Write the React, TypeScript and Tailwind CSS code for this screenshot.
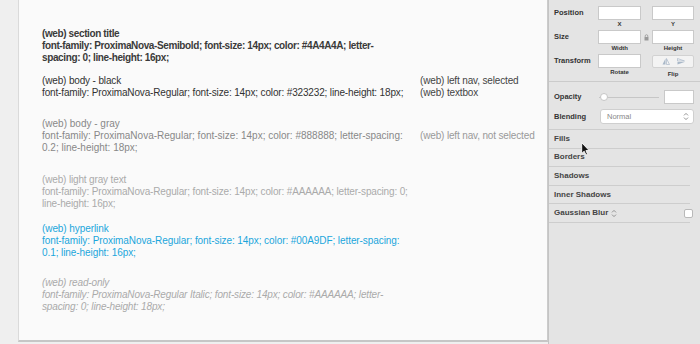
import React from "react";

type Block = {
  lines: string[];
  color: string;
  extra?: string;
  gap: string;
  side?: React.ReactNode;
};

const blocks: Block[] = [
  {
    lines: [
      "(web) section title",
      "font-family: ProximaNova-Semibold; font-size: 14px; color: #4A4A4A; letter-",
      "spacing: 0; line-height: 16px;",
    ],
    color: "text-[#3a3a3a]",
    extra: "font-semibold tracking-[-0.38px]",
    gap: "mt-0",
  },
  {
    lines: [
      "(web) body - black",
      "font-family: ProximaNova-Regular; font-size: 14px; color: #323232; line-height: 18px;",
    ],
    color: "text-[#323232]",
    gap: "mt-[11px]",
    side: (
      <div className="text-[#444]">
        <div>(web) left nav, selected</div>
        <div>(web) textbox</div>
      </div>
    ),
  },
  {
    lines: [
      "(web) body - gray",
      "font-family: ProximaNova-Regular; font-size: 14px; color: #888888; letter-spacing:",
      "0.2; line-height: 18px;",
    ],
    color: "text-[#888]",
    extra: "tracking-[0px]",
    gap: "mt-[19px]",
    side: <div className="mt-[12px] text-[#999] tracking-[-0.15px]">(web) left nav, not selected</div>,
  },
  {
    lines: [
      "(web) light gray text",
      "font-family: ProximaNova-Regular; font-size: 14px; color: #AAAAAA; letter-spacing: 0;",
      "line-height: 16px;",
    ],
    color: "text-[#aaa]",
    gap: "mt-[20px]",
  },
  {
    lines: [
      "(web) hyperlink",
      "font-family: ProximaNova-Regular; font-size: 14px; color: #00A9DF; letter-spacing:",
      "0.1; line-height: 16px;",
    ],
    color: "text-[#1aa6dc]",
    extra: "tracking-[-0.08px]",
    gap: "mt-[13px]",
  },
  {
    lines: [
      "(web) read-only",
      "font-family: ProximaNova-Regular Italic; font-size: 14px; color: #AAAAAA; letter-",
      "spacing: 0; line-height: 18px;",
    ],
    color: "text-[#aaa]",
    extra: "italic",
    gap: "mt-[18px]",
  },
];

const Updown = () => (
  <svg width="6" height="9" viewBox="0 0 6 9" fill="none" stroke="#888" strokeWidth="0.9">
    <path d="M1 3.4 L3 1.4 L5 3.4" />
    <path d="M1 5.6 L3 7.6 L5 5.6" />
  </svg>
);

const Input = ({ w }: { w: string }) => (
  <div className={`${w} h-[14px] bg-white border border-[#c9c9c9]`} />
);

const Section = ({ label }: { label: string }) => (
  <div className="h-[18.6px] mr-[10px] flex items-center border-b border-[#cdcdcd] pl-[5px] text-[8px] font-bold text-[#444]">
    <span>{label}</span>
  </div>
);

const App: React.FC = () => {
  return (
    <div className="w-[700px] h-[344px] flex overflow-hidden font-['Liberation_Sans',Arial,sans-serif]">
      {/* canvas */}
      <div className="w-[548px] h-full bg-[#efefef] pl-[18px]">
        <div className="w-[530px] h-[342px] bg-[#fafafa] border-l border-r border-b-2 border-l-[#dadada] border-r-[#cbcbcb] border-b-[#c6c6c6] pt-[28px] pl-[23px] text-[10px] leading-[12px] tracking-[-0.15px]">
          {blocks.map((b, i) => (
            <div key={i} className={`flex ${b.gap}`}>
              <div className={`w-[378px] shrink-0 ${b.color} ${b.extra ?? ""}`}>
                {b.lines.map((l, j) => (
                  <div key={j} className="whitespace-nowrap">{l}</div>
                ))}
              </div>
              {b.side && <div className="whitespace-nowrap">{b.side}</div>}
            </div>
          ))}
        </div>
      </div>

      {/* inspector */}
      <div className="relative w-[152px] h-full bg-[#e4e4e4] border-l border-[#c4c4c4] text-[#333]">
        <div className="pl-[5px] pr-[6px] pt-[6px]">
          <div className="flex items-start">
            <div className="w-[45px] text-[7.5px] font-bold leading-[14px]">Position</div>
            <div className="flex flex-col items-center">
              <Input w="w-[43px]" />
              <span className="text-[6px] font-bold leading-[9px]">X</span>
            </div>
            <div className="ml-[11px] flex flex-col items-center">
              <Input w="w-[42px]" />
              <span className="text-[6px] font-bold leading-[9px]">Y</span>
            </div>
          </div>
          <div className="flex items-start mt-[1px]">
            <div className="w-[45px] text-[7.5px] font-bold leading-[14px]">Size</div>
            <div className="flex flex-col items-center">
              <Input w="w-[43px]" />
              <span className="text-[6px] font-bold leading-[9px]">Width</span>
            </div>
            <div className="w-[11px] h-[14px] flex items-center justify-center">
              <svg width="5" height="7" viewBox="0 0 5 7">
                <path d="M1.2 3 V2 a1.3 1.3 0 0 1 2.6 0 V3" fill="none" stroke="#999" strokeWidth="0.8" />
                <rect x="0.5" y="3" width="4" height="3.5" fill="#999" />
              </svg>
            </div>
            <div className="flex flex-col items-center">
              <Input w="w-[42px]" />
              <span className="text-[6px] font-bold leading-[9px]">Height</span>
            </div>
          </div>
          <div className="flex items-start mt-[1px]">
            <div className="w-[45px] text-[7.5px] font-bold leading-[14px]">Transform</div>
            <div className="flex flex-col items-center">
              <Input w="w-[43px]" />
              <span className="text-[6px] font-bold leading-[9px]">Rotate</span>
            </div>
            <div className="ml-[11px] flex flex-col items-center">
              <div className="w-[42px] h-[13px] mt-[1px] rounded-[2px] bg-[#f3f3f3] border border-[#d2d2d2] flex items-center justify-around px-[5px]">
                <svg width="8" height="7" viewBox="0 0 8 7">
                  <path d="M3.5 0.5 L3.5 6.5 L0.5 6.5 Z" fill="#a9b8c8" />
                  <path d="M4.5 0.5 L4.5 6.5 L7.5 6.5 Z" fill="none" stroke="#a9b8c8" strokeWidth="0.7" />
                </svg>
                <svg width="8" height="7" viewBox="0 0 8 7">
                  <path d="M0.5 0.5 L7.5 3 L0.5 3 Z" fill="none" stroke="#a9b8c8" strokeWidth="0.7" />
                  <path d="M0.5 4 L7.5 4 L0.5 6.5 Z" fill="#a9b8c8" />
                </svg>
              </div>
              <span className="text-[6px] font-bold leading-[10px] mt-[1px]">Flip</span>
            </div>
          </div>
        </div>

        <div className="mt-[2px] border-t border-[#cbcbcb]" />

        <div className="pl-[5px] pr-[6px] pt-[8px]">
          <div className="flex items-center h-[14px]">
            <div className="w-[45px] text-[7.5px] font-bold">Opacity</div>
            <div className="relative w-[60px] h-[14px] flex items-center">
              <div className="w-full h-[1px] bg-[#c6c6c6]" />
              <div className="absolute left-[1px] w-[8px] h-[8px] rounded-full bg-white border border-[#c6c6c6]" />
            </div>
            <div className="ml-auto w-[30px] h-[14px] bg-white border border-[#c9c9c9]" />
          </div>
          <div className="flex items-center mt-[5px] h-[15px]">
            <div className="w-[46px] text-[7.5px] font-bold">Blending</div>
            <div className="flex-1 h-[15px] rounded-[3px] bg-white border border-[#cfcfcf] flex items-center justify-between pl-[6px] pr-[4px]">
              <span className="text-[7.5px] text-[#888]">Normal</span>
              <Updown />
            </div>
          </div>
        </div>

        <div className="mt-[5px] mr-[10px] border-t border-[#cdcdcd]" />
        <Section label="Fills" />
        <Section label="Borders" />
        <Section label="Shadows" />
        <Section label="Inner Shadows" />
        <div className="h-[18.6px] flex items-center border-b border-[#cdcdcd] mr-[10px] pl-[5px] text-[8px] font-bold text-[#444]">
          <span>Gaussian Blur</span>
          <span className="ml-[3px] mt-[1px]"><Updown /></span>
          <div className="ml-auto -mr-[3px] w-[9px] h-[9px] rounded-[2px] bg-white border border-[#b9b9b9]" />
        </div>

        {/* mouse cursor */}
        <svg className="absolute left-[32px] top-[142px]" width="9" height="14" viewBox="0 0 9 14">
          <path d="M0.7 0.7 L0.7 11.5 L3.2 9.2 L5 13 L6.6 12.3 L4.9 8.6 L8.2 8.6 Z" fill="#111" stroke="#fff" strokeWidth="0.9" />
        </svg>
      </div>
    </div>
  );
};

export default App;
